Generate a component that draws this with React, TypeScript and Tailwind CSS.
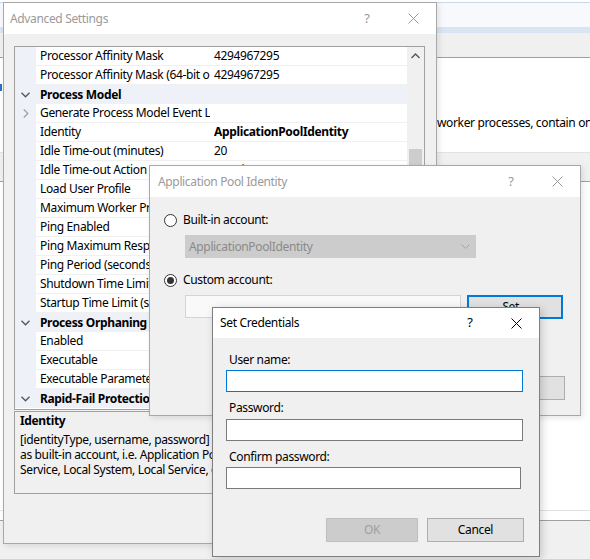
import React from "react";

const font = "font-['Noto_Sans',sans-serif] tracking-[-0.35px]";

function CloseIcon({ color }: { color: string }) {
  return (
    <svg width="11" height="11" viewBox="0 0 11 11">
      <path d="M0.5 0.5 L10.5 10.5 M10.5 0.5 L0.5 10.5" stroke={color} strokeWidth="1" fill="none" />
    </svg>
  );
}

function TitleBar({
  title,
  active,
  h,
  pl,
}: {
  title: string;
  active?: boolean;
  h: string;
  pl: string;
}) {
  const c = active ? "#000000" : "#9a9a9a";
  return (
    <div className={`flex items-center bg-white ${h}`}>
      <div className={`flex-1 ${pl} ${active ? "text-black" : "text-[#9a9a9a]"} text-[12px] whitespace-nowrap`}>
        {title}
      </div>
      <div className={`w-[46px] flex justify-center text-[13px] ${active ? "text-black" : "text-[#9a9a9a]"}`}>?</div>
      <div className="w-[46px] flex justify-center">
        <CloseIcon color={c} />
      </div>
    </div>
  );
}

type Row =
  | { cat: string }
  | { name: string; value?: string; bold?: boolean; expand?: boolean };

const rows: Row[] = [
  { name: "Processor Affinity Mask", value: "4294967295" },
  { name: "Processor Affinity Mask (64-bit option)", value: "4294967295" },
  { cat: "Process Model" },
  { name: "Generate Process Model Event Log Entry", expand: true },
  { name: "Identity", value: "ApplicationPoolIdentity", bold: true },
  { name: "Idle Time-out (minutes)", value: "20" },
  { name: "Idle Time-out Action", value: "Terminate" },
  { name: "Load User Profile", value: "True" },
  { name: "Maximum Worker Processes", value: "1" },
  { name: "Ping Enabled", value: "True" },
  { name: "Ping Maximum Response Time (seconds)", value: "90" },
  { name: "Ping Period (seconds)", value: "30" },
  { name: "Shutdown Time Limit (seconds)", value: "90" },
  { name: "Startup Time Limit (seconds)", value: "90" },
  { cat: "Process Orphaning" },
  { name: "Enabled", value: "False" },
  { name: "Executable", value: "" },
  { name: "Executable Parameters", value: "" },
  { cat: "Rapid-Fail Protection" },
];

function ChevronDown() {
  return (
    <svg width="9" height="6" viewBox="0 0 9 6">
      <path d="M0.5 0.8 L4.5 4.8 L8.5 0.8" stroke="#555" strokeWidth="1.3" fill="none" />
    </svg>
  );
}
function ChevronRight() {
  return (
    <svg width="6" height="9" viewBox="0 0 6 9">
      <path d="M0.8 0.5 L4.8 4.5 L0.8 8.5" stroke="#a0a0a0" strokeWidth="1.3" fill="none" />
    </svg>
  );
}

function GridRow({ r }: { r: Row }) {
  if ("cat" in r) {
    return (
      <div className="flex h-[19px] shrink-0 bg-[#eef1f8] items-center">
        <div className="w-[21px] flex justify-center">
          <ChevronDown />
        </div>
        <div className="pl-[4px] font-bold whitespace-nowrap">{r.cat}</div>
      </div>
    );
  }
  return (
    <div className="flex h-[19px] shrink-0">
      <div className="w-[21px] bg-[#eef1f8] flex items-center justify-center">{r.expand ? <ChevronRight /> : null}</div>
      <div className="w-[174px] pl-[4px] overflow-hidden whitespace-nowrap border-b border-[#f0f0f0] bg-white flex items-center">
        {r.name}
      </div>
      <div
        className={`flex-1 pl-[4px] overflow-hidden whitespace-nowrap border-b border-[#f0f0f0] bg-white flex items-center ${
          r.bold ? "font-bold" : ""
        }`}
      >
        {r.value}
      </div>
    </div>
  );
}

function Radio({ checked }: { checked?: boolean }) {
  return (
    <div className="w-[13px] h-[13px] rounded-full border border-[#333] bg-white flex items-center justify-center shrink-0">
      {checked ? <div className="w-[7px] h-[7px] rounded-full bg-[#333]" /> : null}
    </div>
  );
}

export default function App() {
  return (
    <div className={`relative w-[590px] h-[559px] overflow-hidden bg-white text-[12px] text-black ${font}`}>
      {/* Background IIS window */}
      <div className="flex flex-col h-full">
        <div className="h-[2px] bg-white" />
        <div className="h-px bg-[#c9d7e8]" />
        <div className="h-[24px] bg-[#f7f9fc]" />
        <div className="h-[6px] bg-[#d9e5f2]" />
        <div className="h-[25px] bg-[#f0f0f0] border-b border-[#a0a0a0]" />
        <div className="h-[95px] bg-white border-b border-[#e3e3e3] flex items-end pb-[20px] pl-[437px] overflow-hidden">
          <div className="whitespace-nowrap text-[12px]">
            worker processes, contain one or more applications, and provide isolation
          </div>
        </div>
        <div className="h-[29px] bg-[#f0f0f0] border-b border-[#a0a0a0]" />
        <div className="h-[329px] bg-white border-b border-[#e3e3e3]" />
        <div className="h-[10px] bg-white border-b border-[#a0a0a0]" />
        <div className="flex-1 bg-[#f0f0f0]" />
      </div>
      <div className="absolute left-0 top-[84px] w-[2px] h-[7px] bg-[#2a6fc9]" />

      {/* Advanced Settings */}
      <div className="absolute left-[3px] top-[2px] w-[434px] h-[542px] border border-[#a8a8a8] bg-[#f0f0f0] flex flex-col shadow-[2px_2px_6px_rgba(0,0,0,0.1)]">
        <TitleBar title="Advanced Settings" h="h-[31px]" pl="pl-[6px]" />
        <div className="flex flex-col pl-[10px] pr-[11px] pt-[12px]">
          <div className="h-[364px] border border-[#a0a0a0] flex bg-white overflow-hidden">
            <div className="flex-1 flex flex-col overflow-hidden">
              {rows.map((r, i) => (
                <GridRow key={i} r={r} />
              ))}
            </div>
            <div className="w-[17px] bg-[#f0f0f0] flex flex-col">
              <div className="h-[17px] flex items-center justify-center">
                <svg width="9" height="6" viewBox="0 0 9 6">
                  <path d="M0.5 5 L4.5 1 L8.5 5" stroke="#555" strokeWidth="1.4" fill="none" />
                </svg>
              </div>
              <div className="mt-[85px] mx-[2px] h-[120px] bg-[#cdcdcd]" />
            </div>
          </div>
          <div className="mt-[1px] h-[83px] border border-[#a0a0a0] bg-[#f0f0f0] px-[5px] pt-[1px] overflow-hidden">
            <div className="font-bold leading-[16px]">Identity</div>
            <div className="mt-[3px] leading-[15px] whitespace-nowrap">
              <div>[identityType, username, password] Configures the application pool to run</div>
              <div>as built-in account, i.e. Application Pool Identity (recommended), Network</div>
              <div>Service, Local System, Local Service, or as a specific user identity.</div>
            </div>
          </div>
        </div>
      </div>

      {/* Application Pool Identity */}
      <div className="absolute left-[149px] top-[165px] w-[432px] h-[251px] border border-[#a8a8a8] bg-[#f0f0f0] flex flex-col shadow-[2px_2px_6px_rgba(0,0,0,0.1)]">
        <TitleBar title="Application Pool Identity" h="h-[31px]" pl="pl-[8px]" />
        <div className="flex flex-col">
          <div className="mt-[15px] pl-[14px] h-[16px] flex items-center gap-[6px]">
            <Radio />
            <span>Built-in account:</span>
          </div>
          <div className="mt-[7px] ml-[35px] w-[291px] h-[23px] bg-[#cccccc] flex items-center pl-[4px] pr-[6px] text-[#8a8a8a]">
            <span className="flex-1">ApplicationPoolIdentity</span>
            <svg width="9" height="5" viewBox="0 0 9 5">
              <path d="M0.5 0.5 L4.5 4.5 L8.5 0.5" stroke="#a6a6a6" strokeWidth="1" fill="none" />
            </svg>
          </div>
          <div className="mt-[14px] pl-[14px] h-[16px] flex items-center gap-[6px]">
            <Radio checked />
            <span>Custom account:</span>
          </div>
          <div className="mt-[7px] ml-[35px] flex gap-[6px] items-start">
            <div className="w-[276px] h-[23px] bg-[#f9f9f9] border border-[#d4d4d4]" />
            <div className="w-[96px] h-[24px] bg-[#e1e1e1] border-2 border-[#0078d7] flex items-center justify-center">
              Set...
            </div>
          </div>
          <div className="mt-[57px] pr-[15px] flex justify-end gap-[6px]">
            <div className="w-[96px] h-[24px] bg-[#e1e1e1] border border-[#adadad] flex items-center justify-center">OK</div>
            <div className="w-[96px] h-[24px] bg-[#e1e1e1] border border-[#adadad] flex items-center justify-center">
              Cancel
            </div>
          </div>
        </div>
      </div>

      {/* Set Credentials */}
      <div className="absolute left-[212px] top-[307px] w-[328px] h-[250px] border border-[#7f7f7f] bg-[#f0f0f0] flex flex-col shadow-[2px_2px_8px_rgba(0,0,0,0.18)]">
        <TitleBar title="Set Credentials" active h="h-[30px]" pl="pl-[7px]" />
        <div className="flex flex-col pl-[13px]">
          <div className="mt-[14px] pl-[3px] leading-[16px]">User name:</div>
          <div className="mt-[2px] w-[297px] h-[22px] bg-white border border-[#0078d7]" />
          <div className="mt-[8px] pl-[3px] leading-[16px]">Password:</div>
          <div className="mt-[3px] w-[297px] h-[22px] bg-white border border-[#7a7a7a]" />
          <div className="mt-[8px] pl-[3px] leading-[16px]">Confirm password:</div>
          <div className="mt-[2px] w-[295px] h-[22px] bg-white border border-[#7a7a7a]" />
          <div className="mt-[29px] pr-[15px] flex justify-end gap-[9px]">
            <div className="w-[92px] h-[24px] bg-[#cccccc] border border-[#bfbfbf] text-[#a0a0a0] flex items-center justify-center">
              OK
            </div>
            <div className="w-[97px] h-[24px] bg-[#e1e1e1] border border-[#adadad] flex items-center justify-center">
              Cancel
            </div>
          </div>
        </div>
      </div>
    </div>
  );
}
